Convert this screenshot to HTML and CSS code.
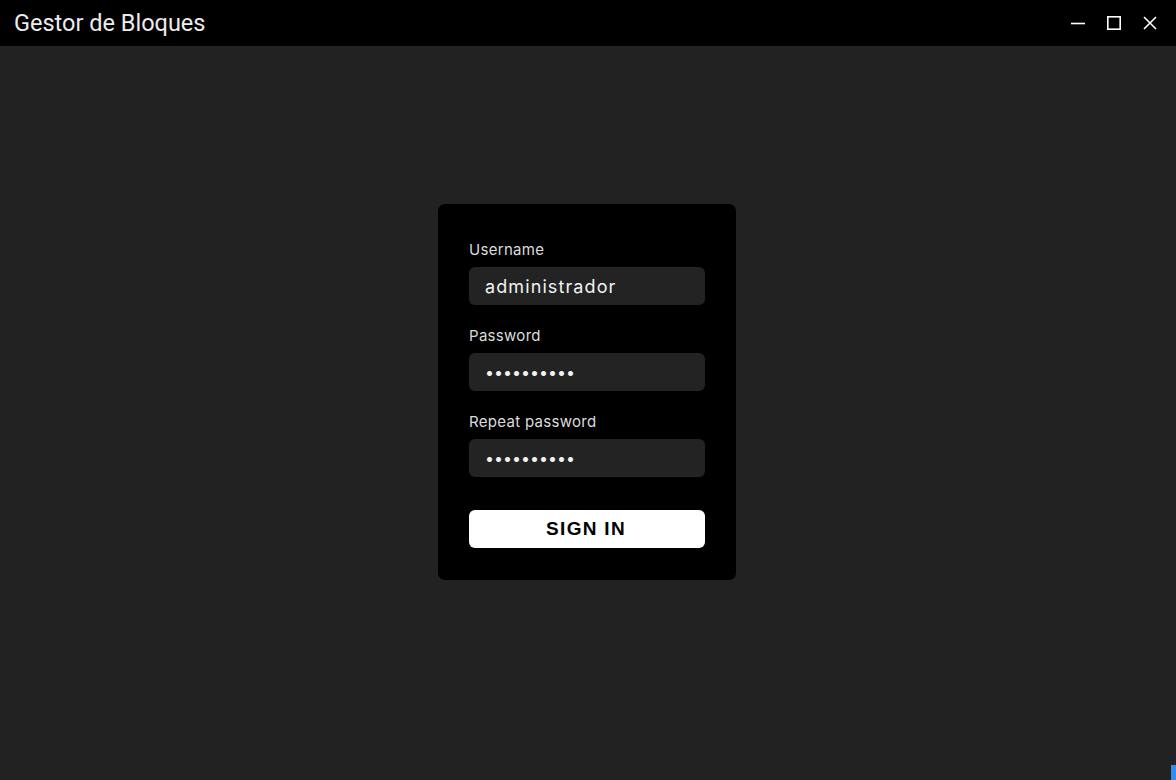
FILE: index.html
```html
<!DOCTYPE html>
<html lang="es">
<head>
    <meta charset="UTF-8" />
    <meta name="viewport" content="width=device-width, initial-scale=1.0" />
    <title>Gestor de Bloques</title>
    <link rel="stylesheet" href="styles.css">
</head>
<body>

    <header class="titlebar">
        <span class="app-title">Gestor de Bloques</span>
        <div class="win-controls">
            <button class="win-btn" aria-label="Minimizar">
                <svg width="16" height="16" viewBox="0 0 16 16"><path d="M1 8.5h14" stroke="#fff" stroke-width="1.6" /></svg>
            </button>
            <button class="win-btn" aria-label="Maximizar">
                <svg width="16" height="16" viewBox="0 0 16 16"><rect x="1.8" y="1.8" width="12.4" height="12.4" fill="none" stroke="#fff" stroke-width="1.6" /></svg>
            </button>
            <button class="win-btn" aria-label="Cerrar">
                <svg width="16" height="16" viewBox="0 0 16 16"><path d="M2 2l12 12M14 2L2 14" stroke="#fff" stroke-width="1.6" /></svg>
            </button>
        </div>
    </header>

    <main class="content">
        <form class="card" onsubmit="return false">
            <label class="field-label" for="username">Username</label>
            <input class="field" type="text" id="username" value="administrador" />

            <label class="field-label" for="password">Password</label>
            <input class="field secret" type="password" id="password" value="0123456789" />

            <label class="field-label" for="password2">Repeat password</label>
            <input class="field secret" type="password" id="password2" value="0123456789" />

            <button class="signin-btn" type="submit">SIGN IN</button>
        </form>
    </main>

    <div class="corner-mark"></div>

</body>
</html>
```

FILE: styles.css
```css
:root {
    --bg: #222222;
    --panel: #000000;
    --field: #232323;
    --text: #e6e6e6;
    --white: #ffffff;
}

* {
    box-sizing: border-box;
}

html, body {
    height: 100%;
}

body {
    font-family: Inter, Roboto, sans-serif;
    background: var(--bg);
    color: var(--text);
    margin: 0;
    padding: 0;
    display: flex;
    flex-direction: column;
    overflow: hidden;
}

.titlebar {
    height: 46px;
    background: #000;
    display: flex;
    justify-content: space-between;
    align-items: center;
    padding: 0 14px;
}

.app-title {
    font-family: Roboto, sans-serif;
    font-size: 23.5px;
    color: #ececec;
}

.win-controls {
    display: flex;
    gap: 20px;
    margin-right: 4px;
}

    .win-controls .win-btn {
        width: 16px;
        height: 16px;
        padding: 0;
        border: none;
        background: none;
        cursor: pointer;
        display: flex;
    }

.content {
    flex: 1;
    display: flex;
    justify-content: center;
    align-items: flex-start;
    padding-top: 158px;
}

.card {
    width: 298px;
    margin-left: -2px;
    background: var(--panel);
    border-radius: 7px;
    padding: 37px 31px 32px;
    display: flex;
    flex-direction: column;
}

.field-label {
    font-size: 15px;
    line-height: 18px;
    letter-spacing: 0.3px;
    color: #dcdcdc;
    margin-bottom: 8px;
}

.field {
    width: 236px;
    height: 38px;
    background: var(--field);
    border: none;
    border-radius: 6px;
    color: #f2f2f2;
    font-family: Inter, Roboto, sans-serif;
    font-size: 18px;
    letter-spacing: 1.1px;
    padding: 0 16px;
    margin-bottom: 22px;
    outline: none;
}

    .field.secret {
        font-size: 16px;
        letter-spacing: 0;
        padding-left: 16px;
    }

.signin-btn {
    width: 236px;
    height: 38px;
    margin-top: 11px;
    background: var(--white);
    color: #000;
    border: none;
    border-radius: 6px;
    font-family: "Liberation Sans", Arial, sans-serif;
    font-weight: bold;
    font-size: 19px;
    letter-spacing: 1.3px;
    padding-left: 4px;
    cursor: pointer;
}

.corner-mark {
    position: absolute;
    right: 0;
    bottom: 0;
    width: 5px;
    height: 15px;
    background: #2f8ef0;
}
```
